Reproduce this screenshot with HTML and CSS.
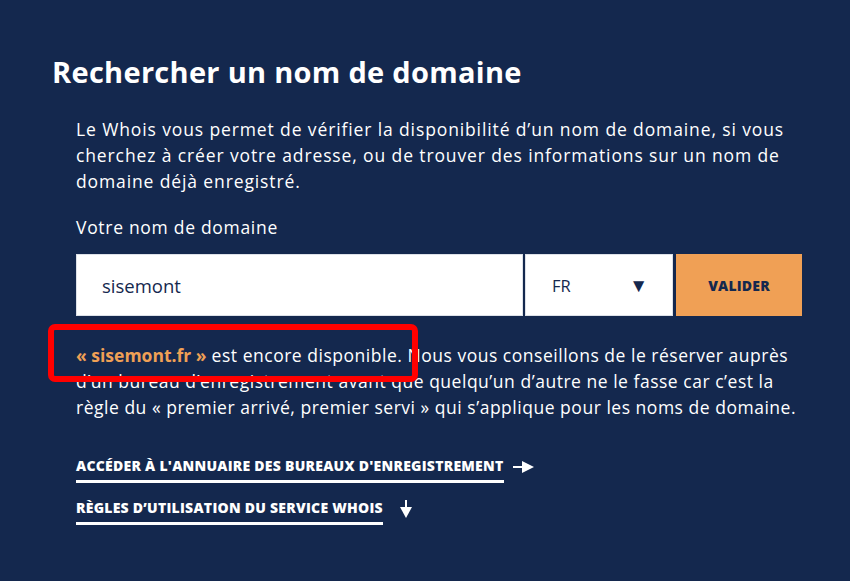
FILE: index.html
```html
<!DOCTYPE html>
<html lang="fr">
  <head>
    <meta charset="UTF-8" />
    <meta name="viewport" content="width=device-width, initial-scale=1.0" />
    <title>Whois</title>
    <link rel="stylesheet" href="styles.css">
  </head>
  <body>
    <div class="panel">
      <h1>Rechercher un nom de domaine</h1>

      <div class="content">
        <p class="intro">
          Le Whois vous permet de vérifier la disponibilité d’un nom de domaine, si vous<br />
          cherchez à créer votre adresse, ou de trouver des informations sur un nom de<br />
          domaine déjà enregistré.
        </p>

        <!-- Search form -->
        <form class="search" onsubmit="event.preventDefault()">
          <label for="domain">Votre nom de domaine</label>
          <div class="search-row">
            <input type="text" id="domain" value="sisemont" />
            <div class="select">
              <span>FR</span>
              <span class="caret">▼</span>
            </div>
            <button type="submit">VALIDER</button>
          </div>
        </form>

        <!-- Result -->
        <div class="result">
          <p>
            <strong class="domain">« sisemont.fr »</strong> est encore disponible. Nous vous conseillons de le réserver auprès<br />
            d’un bureau d’enregistrement avant que quelqu’un d’autre ne le fasse car c’est la<br />
            règle du « premier arrivé, premier servi » qui s’applique pour les noms de domaine.
          </p>
          <span class="highlight"></span>
        </div>

        <!-- Links -->
        <ul class="links">
          <li>
            <a href="#">ACCÉDER À L'ANNUAIRE DES BUREAUX D'ENREGISTREMENT</a>
            <svg width="22" height="12" viewBox="0 0 22 12"><path d="M0 6h10" stroke="#fff" stroke-width="2"/><path d="M9 0l12 6-12 6z" fill="#fff"/></svg>
          </li>
          <li>
            <a href="#">RÈGLES D’UTILISATION DU SERVICE WHOIS</a>
            <svg class="down" width="12" height="18" viewBox="0 0 12 18"><path d="M6 0v9" stroke="#fff" stroke-width="2"/><path d="M0 7l6 11 6-11z" fill="#fff"/></svg>
          </li>
        </ul>
      </div>
    </div>
  </body>
</html>
```

FILE: styles.css
```css
body {
  margin: 0;
  background-color: #fff;
  font-family: "Open Sans", "Noto Sans", sans-serif;
}
.panel {
  width: 850px;
  height: 581px;
  box-sizing: border-box;
  background-color: #14284e;
  color: #fff;
  padding: 55px 0 0 52px;
}
h1 {
  margin: 0;
  font-size: 29px;
  font-weight: 700;
  letter-spacing: 0.3px;
  line-height: 34px;
}
.content {
  width: 770px;
  margin: 27px 0 0 24px;
}
.intro {
  margin: 0;
  font-size: 17.5px;
  letter-spacing: 0.88px;
  line-height: 26px;
}
.search label {
  display: block;
  margin-top: 20px;
  font-size: 17.5px;
  letter-spacing: 0.7px;
  line-height: 26px;
}
.search-row {
  display: flex;
  gap: 2px;
  width: 726px;
  margin-top: 14px;
  height: 62px;
}
.search-row input,
.select {
  box-sizing: border-box;
  height: 62px;
  margin: 0;
  border: 1px solid #dde1e8;
  background-color: #fff;
  color: #14284e;
  font-family: inherit;
  font-size: 18.5px;
}
.search-row input {
  width: 447px;
  padding: 0 0 0 25px;
  outline: none;
}
.select {
  width: 148px;
  display: flex;
  align-items: center;
  justify-content: space-between;
  padding: 0 24px 0 26px;
  font-size: 16.5px;
}
.caret {
  font-size: 19px;
}
button {
  width: 126px;
  height: 62px;
  margin-left: 1px;
  border: none;
  background-color: #f0a055;
  color: #14284e;
  font-family: inherit;
  font-size: 14px;
  font-weight: 800;
  letter-spacing: 0.2px;
  cursor: pointer;
}
.result {
  position: relative;
  margin-top: 26px;
}
.result p {
  margin: 0;
  font-size: 17.5px;
  letter-spacing: 0.52px;
  line-height: 26px;
}
.domain {
  color: #f0a055;
  letter-spacing: 0;
}
.highlight {
  position: absolute;
  left: -28px;
  top: -18px;
  width: 358px;
  height: 46px;
  border: 6px solid #ff0000;
  border-radius: 7px;
}
.links {
  list-style: none;
  margin: 37px 0 0;
  padding: 0;
}
.links li {
  display: flex;
  align-items: center;
  gap: 9px;
  margin-bottom: 16px;
}
.links a {
  color: #fff;
  text-decoration: none;
  font-size: 14px;
  font-weight: 800;
  letter-spacing: 0.25px;
  line-height: 18px;
  border-bottom: 3px solid #fff;
  padding-bottom: 5px;
}
.links svg {
  margin-top: -6px;
}
.links .down {
  margin-left: 8px;
}
```
